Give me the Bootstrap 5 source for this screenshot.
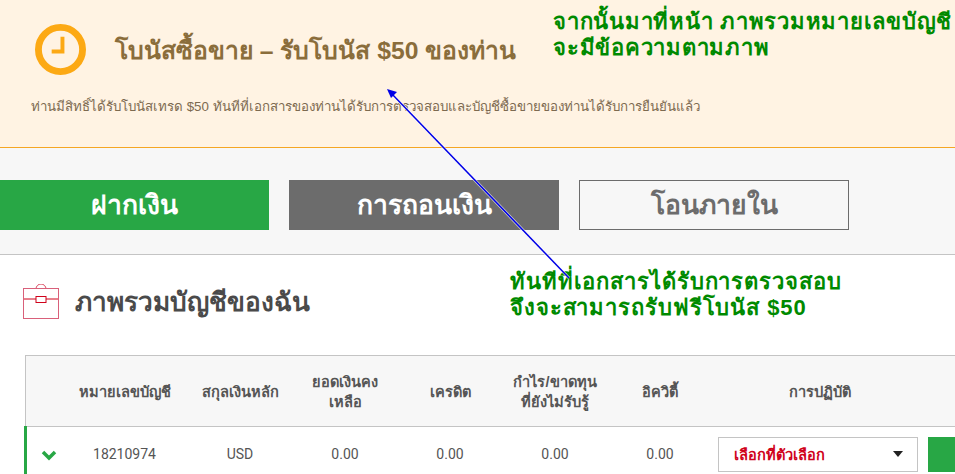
<!DOCTYPE html>
<html lang="th">
<head>
<meta charset="utf-8">
<title>Overview</title>
<link rel="stylesheet" href="https://cdn.jsdelivr.net/npm/bootstrap@5.3.0/dist/css/bootstrap.min.css">
<style>
html,body{height:474px;overflow:hidden}
body{font-family:Roboto,"Liberation Sans",sans-serif;color:#555;background:#fff;position:relative}
.promo{height:148px;background:#fff3e3;border-bottom:1px solid #f5a623;padding:24px 0 0 35px}
.promo-clock{width:51px;height:51px;flex:none}
.promo-title{font:bold 24.700px "Liberation Sans",sans-serif;color:#8a6d3b;margin:2px 0 0 29px}
.promo-text{font:13.300px "Liberation Sans",sans-serif;color:#7d6a50;margin:21px 0 0 -4px}
.cash-band{height:107px;background:#f7f7f7;border-bottom:1px solid #c4c4c4;padding:32px 0 0;gap:20px}
.cash-btn{width:270px;height:50px;font:bold 26.500px/50px "Liberation Sans",sans-serif;text-align:center;border-radius:0;padding:0;text-decoration:none}
.cash-first{margin-left:-1px;background:#28a745;color:#fff}
.cash-second{background:#6c6c6c;color:#fff}
.cash-third{background:#f7f7f7;color:#6c6c6c;border:1px solid #6c6c6c;line-height:48px}
.overview-head{padding:26px 0 0 23px;gap:15px}
.overview-title{font:bold 26.200px "Liberation Sans",sans-serif;color:#4a4a4a;margin:0}
.acct-wrap{margin:32px 0 0 24px;width:1100px}
.acct-table{table-layout:fixed;width:1100px;border:1px solid #c4c4c4;border-bottom:0;margin:0;font-size:14px}
.acct-table th{background:#f7f7f7;height:71px;padding:1px 0 0;text-align:center;vertical-align:middle;font:bold 14.600px/20px "Liberation Sans",sans-serif;color:#555;border-bottom:1px solid #c4c4c4}
.acct-table td{height:55px;padding:0;text-align:center;vertical-align:middle;color:#555;border:0}
.acct-table td:first-child{border-left:3px solid #28a745}
.pad-cur{padding-left:10px !important}
.pick{width:200px;height:35px;margin-left:5px;border:1px solid #c4c4c4;padding:0 14px 0 15px;font:bold 14.600px "Liberation Sans",sans-serif;color:#d0021b;background:#fff}
.pick-caret{border:5px solid transparent;border-top:6px solid #222;border-bottom:0}
.go-btn{width:120px;height:35px;background:#28a745}
.note{position:absolute;font:bold 22px/26px "Liberation Sans",sans-serif;color:#008a00;margin:0}
.note-top{left:553px;top:9px;letter-spacing:.75px}
.note-mid{left:510px;top:269px;letter-spacing:.9px}
.arrow{position:absolute;left:0;top:0;pointer-events:none}
</style>
</head>
<body>
<section class="promo">
  <div class="d-flex align-items-center">
    <svg class="promo-clock" viewBox="0 0 52 52"><circle cx="26" cy="26" r="22.500" fill="none" stroke="#fca914" stroke-width="7"/><path d="M28 13v15H17" fill="none" stroke="#fca914" stroke-width="4"/></svg>
    <h2 class="promo-title">โบนัสซื้อขาย – รับโบนัส $50 ของท่าน</h2>
  </div>
  <p class="promo-text">ท่านมีสิทธิ์ได้รับโบนัสเทรด $50 ทันทีที่เอกสารของท่านได้รับการตรวจสอบและบัญชีซื้อขายของท่านได้รับการยืนยันแล้ว</p>
</section>
<section class="cash-band d-flex">
  <a class="cash-btn cash-first">ฝากเงิน</a>
  <a class="cash-btn cash-second">การถอนเงิน</a>
  <a class="cash-btn cash-third">โอนภายใน</a>
</section>
<div class="overview-head d-flex align-items-center">
  <svg width="37" height="36" viewBox="0 0 37 36"><path d="M13 5a5 5 0 0 1 10 0" fill="none" stroke="#d9485f"/><rect x=".5" y="4.500" width="35" height="30" fill="#fff" stroke="#d9607a"/><path d="M1 15h12M23 15h12" stroke="#d0021b"/><rect x="13" y="12.500" width="10" height="6" fill="#fff" stroke="#d0021b"/></svg>
  <h2 class="overview-title">ภาพรวมบัญชีของฉัน</h2>
</div>
<div class="acct-wrap">
  <table class="table acct-table">
    <colgroup><col style="width:46px"><col style="width:106px"><col style="width:115px"><col style="width:105px"><col style="width:105px"><col style="width:105px"><col style="width:105px"><col style="width:215px"><col></colgroup>
    <thead><tr><th></th><th>หมายเลขบัญชี</th><th class="pad-cur">สกุลเงินหลัก</th><th>ยอดเงินคง<br>เหลือ</th><th>เครดิต</th><th>กำไร/ขาดทุน<br>ที่ยังไม่รับรู้</th><th>อิควิตี้</th><th>การปฏิบัติ</th><th></th></tr></thead>
    <tbody><tr>
      <td><svg width="16" height="11" viewBox="0 0 16 11"><path d="M2 2l6 6 6-6" fill="none" stroke="#28a745" stroke-width="3.500"/></svg></td>
      <td>18210974</td><td class="pad-cur">USD</td><td>0.00</td><td>0.00</td><td>0.00</td><td>0.00</td>
      <td><div class="pick d-flex align-items-center justify-content-between"><span>เลือกที่ตัวเลือก</span><span class="pick-caret"></span></div></td>
      <td><div class="go-btn"></div></td>
    </tr></tbody>
  </table>
</div>
<p class="note note-top">จากนั้นมาที่หน้า ภาพรวมหมายเลขบัญชี<br>จะมีข้อความตามภาพ</p>
<p class="note note-mid">ทันทีที่เอกสารได้รับการตรวจสอบ<br>จึงจะสามารถรับฟรีโบนัส $50</p>
<svg class="arrow" width="955" height="474" viewBox="0 0 955 474"><path d="M569 278L391 93" stroke="#fff" stroke-width="3" opacity=".7"/><path d="M569 278L391 93" stroke="#0000e6" stroke-width="1.500"/><path d="M387 89l10 3-6 6z" fill="#0000e6"/></svg>
</body>
</html>
